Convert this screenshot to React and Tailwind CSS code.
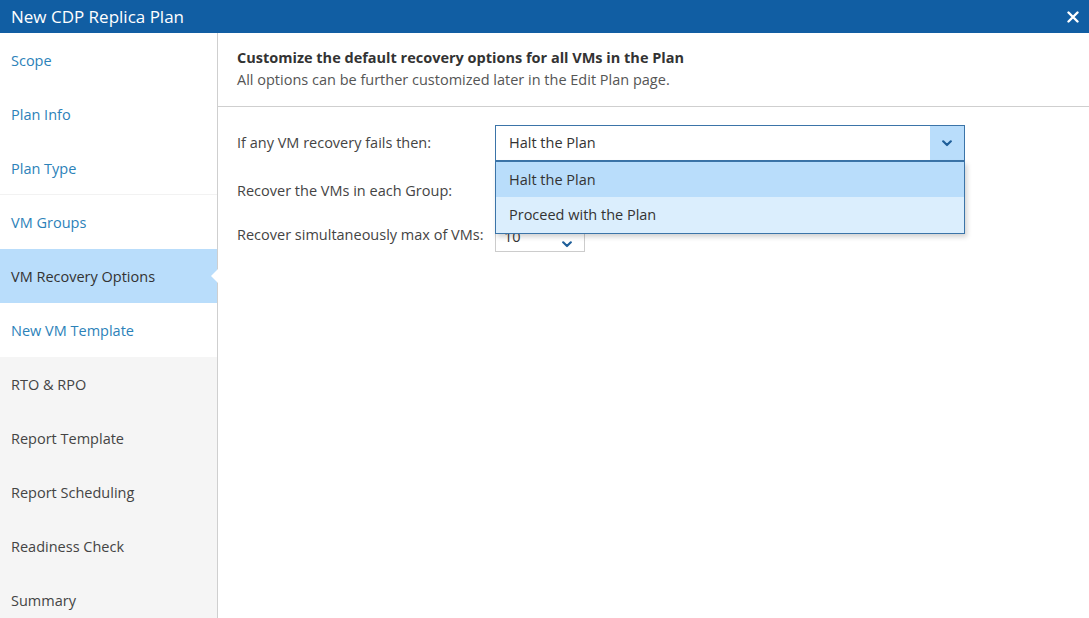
import React from "react";

const font = { fontFamily: '"Open Sans", "Noto Sans", sans-serif' };

function Chevron({ className = "" }) {
  return (
    <svg width="10" height="7" viewBox="0 0 10 7" className={className}>
      <path d="M1.2 1.3 L5 5 L8.8 1.3" fill="none" stroke="#1f5f9a" strokeWidth="2.2" strokeLinecap="round" strokeLinejoin="round" />
    </svg>
  );
}

const items = [
  { label: "Scope", kind: "link" },
  { label: "Plan Info", kind: "link" },
  { label: "Plan Type", kind: "link" },
  { label: "VM Groups", kind: "link" },
  { label: "VM Recovery Options", kind: "active" },
  { label: "New VM Template", kind: "link" },
  { label: "RTO & RPO", kind: "todo" },
  { label: "Report Template", kind: "todo" },
  { label: "Report Scheduling", kind: "todo" },
  { label: "Readiness Check", kind: "todo" },
  { label: "Summary", kind: "todo" },
];

export default function App() {
  return (
    <div className="w-[1089px] h-[618px] overflow-hidden bg-white flex flex-col" style={font}>
      <div className="h-[33px] bg-[#115ea3] flex items-center justify-between pl-[11px] pr-[10px] shrink-0">
        <span className="text-white text-[17px] leading-none">New CDP Replica Plan</span>
        <svg width="12" height="12" viewBox="0 0 12 12">
          <path d="M1.5 1.5 L10.5 10.5 M10.5 1.5 L1.5 10.5" stroke="white" strokeWidth="2.4" strokeLinecap="round" />
        </svg>
      </div>
      <div className="flex flex-1 min-h-0">
        <div className="w-[218px] shrink-0 flex flex-col border-r border-[#cfcfcf]">
          {items.map((it, i) => (
            <div
              key={it.label}
              className={
                "h-[54px] shrink-0 flex items-center pl-[11px] pt-[2px] text-[14.5px] relative " +
                (it.kind === "active"
                  ? "bg-[#b9ddfb] text-[#333]"
                  : it.kind === "link"
                  ? "bg-white text-[#2c82b9]"
                  : "bg-[#f5f5f5] text-[#444]") +
                (i === 2 ? " border-b border-[#f2f2f2]" : "")
              }
            >
              {it.label}
              {it.kind === "active" && (
                <span className="absolute right-[-1px] top-1/2 -translate-y-1/2 w-0 h-0 border-y-[7px] border-y-transparent border-r-[7px] border-r-white" />
              )}
            </div>
          ))}
        </div>
        <div className="flex-1 flex flex-col">
          <div className="h-[74px] border-b border-[#cfcfcf] pl-[19px] pt-[15px] shrink-0">
            <div className="text-[14.5px] font-bold text-[#333] leading-[20px]">
              Customize the default recovery options for all VMs in the Plan
            </div>
            <div className="text-[14.5px] text-[#555] leading-[20px] mt-[2px]">
              All options can be further customized later in the Edit Plan page.
            </div>
          </div>
          <div className="pl-[19px] pt-[18px] relative">
            <div className="flex items-center h-[36px]">
              <div className="w-[258px] text-[14.5px] text-[#444]">If any VM recovery fails then:</div>
              <div className="relative w-[470px] h-[36px] border border-[#3b74a8] flex bg-white">
                <div className="flex-1 flex items-center pl-[13px] text-[14.5px] text-[#333]">Halt the Plan</div>
                <div className="w-[34px] bg-[#b9ddfb] flex items-center justify-center">
                  <Chevron />
                </div>
                <div className="absolute left-[-1px] top-[35px] w-[470px] border border-[#3b74a8] shadow-[2px_3px_5px_rgba(0,0,0,0.18)] z-10 flex flex-col">
                  <div className="h-[35px] bg-[#b9ddfb] flex items-center pl-[13px] text-[14.5px] text-[#333]">Halt the Plan</div>
                  <div className="h-[36px] bg-[#dbeefd] flex items-center pl-[13px] text-[14.5px] text-[#333]">Proceed with the Plan</div>
                </div>
              </div>
            </div>
            <div className="flex items-center h-[46px] mt-[3px]">
              <div className="w-[258px] text-[14.5px] text-[#444] pt-[8px]">Recover the VMs in each Group:</div>
            </div>
            <div className="flex items-center h-[40px] mt-[5px]">
              <div className="w-[258px] text-[14.5px] text-[#444]">Recover simultaneously max of VMs:</div>
              <div className="w-[90px] h-[24px] border border-[#ccc] flex justify-between pl-[8px] pr-[12px] mt-[10px]">
                <span className="text-[14.5px] text-[#333] leading-[16px]">10</span>
                <Chevron className="mt-[12px]" />
              </div>
            </div>
          </div>
        </div>
      </div>
    </div>
  );
}
